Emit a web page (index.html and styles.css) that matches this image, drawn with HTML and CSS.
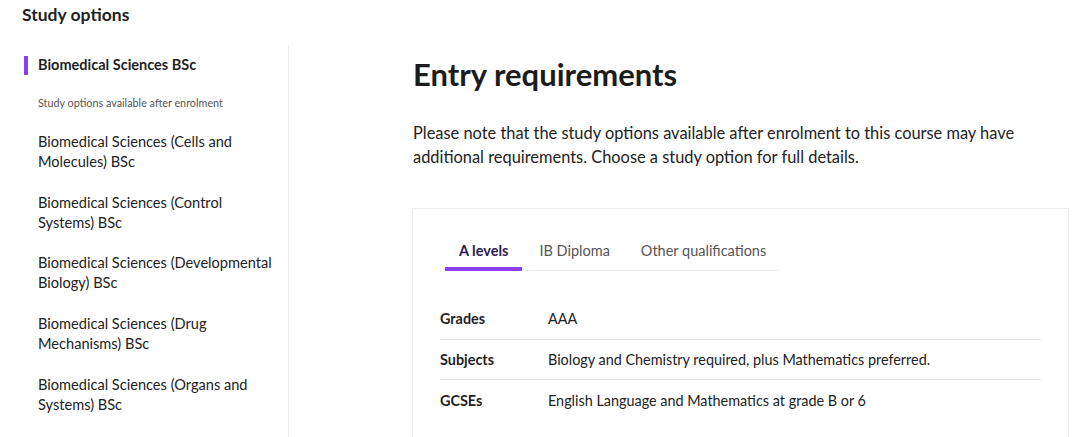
FILE: index.html
```html
<!DOCTYPE html>
<html lang="en">
<head>
<meta charset="utf-8">
<title>Entry requirements</title>
<link rel="stylesheet" href="styles.css">
</head>
<body>
<div class="page">
  <h2 class="page-title">Study options</h2>
  <div class="layout">
    <nav class="sidebar">
      <div class="nav-active">Biomedical Sciences BSc</div>
      <div class="nav-caption">Study options available after enrolment</div>
      <ul class="nav-list">
        <li>Biomedical Sciences (Cells and Molecules) BSc</li>
        <li>Biomedical Sciences (Control Systems) BSc</li>
        <li>Biomedical Sciences (Developmental Biology) BSc</li>
        <li>Biomedical Sciences (Drug Mechanisms) BSc</li>
        <li>Biomedical Sciences (Organs and Systems) BSc</li>
      </ul>
    </nav>
    <main class="main">
      <h1 class="heading">Entry requirements</h1>
      <p class="intro">Please note that the study options available after enrolment to this course may have additional requirements. Choose a study option for full details.</p>
      <section class="card">
        <div class="tabs">
          <span class="tab tab-active">A levels</span>
          <span class="tab">IB Diploma</span>
          <span class="tab">Other qualifications</span>
        </div>
        <div class="table">
          <div class="row"><span class="label">Grades</span><span class="value">AAA</span></div>
          <div class="row"><span class="label">Subjects</span><span class="value">Biology and Chemistry required, plus Mathematics preferred.</span></div>
          <div class="row"><span class="label">GCSEs</span><span class="value">English Language and Mathematics at grade B or 6</span></div>
        </div>
      </section>
    </main>
  </div>
</div>
</body>
</html>
```

FILE: styles.css
```css
* { box-sizing: border-box; }
html, body { margin: 0; padding: 0; background: #fff; }
body {
  font-family: "Lato", "Noto Sans", "Liberation Sans", sans-serif;
  color: #1f1f1f;
  width: 1080px;
  height: 437px;
  overflow: hidden;
}
.page-title {
  margin: 0;
  padding: 3px 0 0 22px;
  height: 45px;
  font-size: 17.5px;
  line-height: 24px;
  font-weight: 700;
}
.layout {
  display: flex;
}
.sidebar {
  width: 289px;
  flex: none;
  border-right: 1px solid #ebebeb;
  min-height: 400px;
  padding-top: 10px;
}
.nav-active {
  position: relative;
  padding-left: 38px;
  font-size: 14.5px;
  line-height: 20px;
  font-weight: 700;
}
.nav-active::before {
  content: "";
  position: absolute;
  left: 24px;
  top: 1px;
  width: 4px;
  height: 19px;
  background: #8d3ef5;
}
.nav-caption {
  margin-top: 21px;
  padding-left: 38px;
  font-size: 10.8px;
  line-height: 14px;
  color: #555;
}
.nav-list {
  list-style: none;
  margin: 22px 0 0;
  padding: 0 14px 0 38px;
  display: flex;
  flex-direction: column;
  gap: 20.7px;
}
.nav-list li {
  font-size: 14.6px;
  line-height: 20px;
  color: #222;
}
.main {
  flex: 1;
  padding: 11px 11px 0 124px;
}
.heading {
  margin: 0;
  font-size: 31px;
  line-height: 36px;
  font-weight: 700;
  color: #1c1c1c;
}
.intro {
  margin: 29px 0 0;
  font-size: 16.4px;
  line-height: 24px;
  color: #222;
  max-width: 640px;
}
.card {
  margin: 39px 0 0 -1px;
  border: 1px solid #ececec;
  border-bottom: none;
  padding: 24px 27px 20px 27px;
  height: 240px;
}
.tabs {
  display: inline-flex;
  gap: 3px;
  margin-left: 5px;
  border-bottom: 1px solid #ececec;
}
.tab {
  padding: 9px 14px 7px;
  font-size: 14.5px;
  line-height: 18px;
  color: #555;
  border-bottom: 4px solid transparent;
  margin-bottom: -1px;
}
.tab-active {
  color: #2d1b4e;
  font-weight: 700;
  border-bottom-color: #8d3ef5;
}
.table {
  margin-top: 28px;
}
.row {
  display: flex;
  align-items: center;
  height: 40.5px;
  font-size: 14.4px;
  border-bottom: 1px solid #e6e6e6;
}
.row:last-child { border-bottom: none; }
.label {
  width: 108px;
  flex: none;
  font-weight: 700;
  color: #1f1f1f;
}
.value {
  color: #222;
}
```
